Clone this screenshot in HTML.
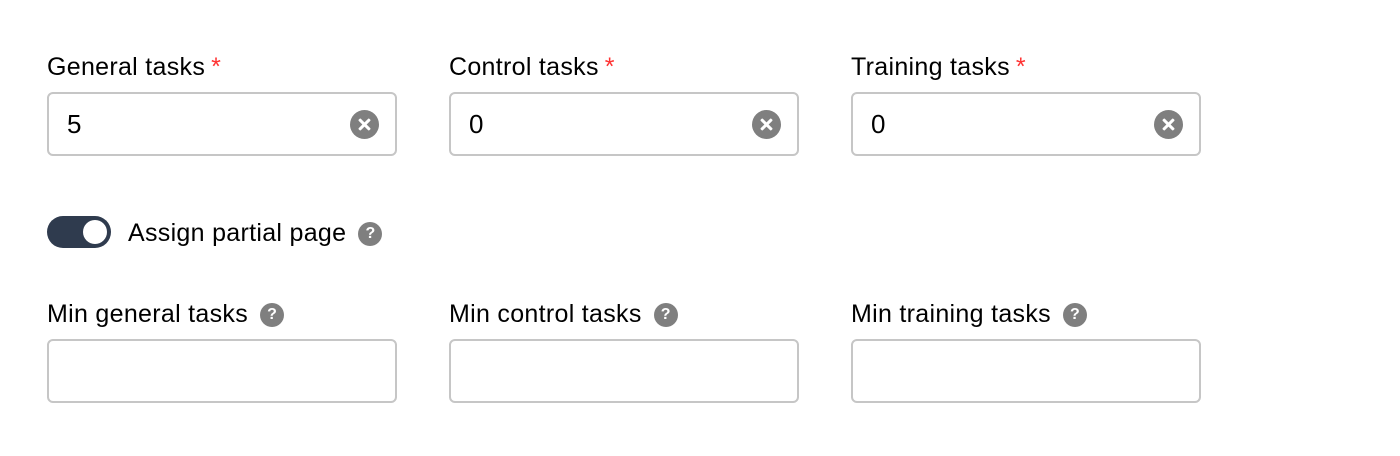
<!DOCTYPE html>
<html><head><style>
body{margin:0;width:1400px;height:456px;background:#fff;font-family:"Liberation Sans",sans-serif;color:#000;position:relative;overflow:hidden}
.lbl{position:absolute;font-size:25px;letter-spacing:0.3px;line-height:28px;white-space:nowrap}
.req{color:#f33;margin-left:6px}
.inp{position:absolute;width:346px;height:60px;border:2px solid #c6c6c6;border-radius:6px;box-sizing:content-box}
.val{position:absolute;left:18px;top:14px;font-size:26px;line-height:32px}
.clr{position:absolute;right:16px;top:16px;width:29px;height:29px;border-radius:50%;background:#7f7f7f}
.clr:before,.clr:after{content:"";position:absolute;left:7px;top:13px;width:15px;height:3px;background:#fff;border-radius:1px;transform:rotate(45deg)}
.clr:after{transform:rotate(-45deg)}
.q{display:inline-block;width:24px;height:24px;border-radius:50%;background:#7f7f7f;color:#fff;font-size:16px;letter-spacing:0;font-weight:bold;line-height:24px;text-align:center;vertical-align:3px;margin-left:12px}
</style></head><body>
<div class="lbl" style="left:47px;top:53px">General tasks<span class="req">*</span></div>
<div class="lbl" style="left:449px;top:53px">Control tasks<span class="req">*</span></div>
<div class="lbl" style="left:851px;top:53px">Training tasks<span class="req">*</span></div>
<div class="inp" style="left:47px;top:92px"><span class="val">5</span><span class="clr"></span></div>
<div class="inp" style="left:449px;top:92px"><span class="val">0</span><span class="clr"></span></div>
<div class="inp" style="left:851px;top:92px"><span class="val">0</span><span class="clr"></span></div>
<div style="position:absolute;left:47px;top:216px;width:64px;height:32px;border-radius:16px;background:#2f3b4e"><div style="position:absolute;right:4px;top:4px;width:24px;height:24px;border-radius:50%;background:#fff"></div></div>
<div class="lbl" style="left:128px;top:219px">Assign partial page<span class="q">?</span></div>
<div class="lbl" style="left:47px;top:300px">Min general tasks<span class="q">?</span></div>
<div class="lbl" style="left:449px;top:300px">Min control tasks<span class="q">?</span></div>
<div class="lbl" style="left:851px;top:300px">Min training tasks<span class="q">?</span></div>
<div class="inp" style="left:47px;top:339px"></div>
<div class="inp" style="left:449px;top:339px"></div>
<div class="inp" style="left:851px;top:339px"></div>
</body></html>
